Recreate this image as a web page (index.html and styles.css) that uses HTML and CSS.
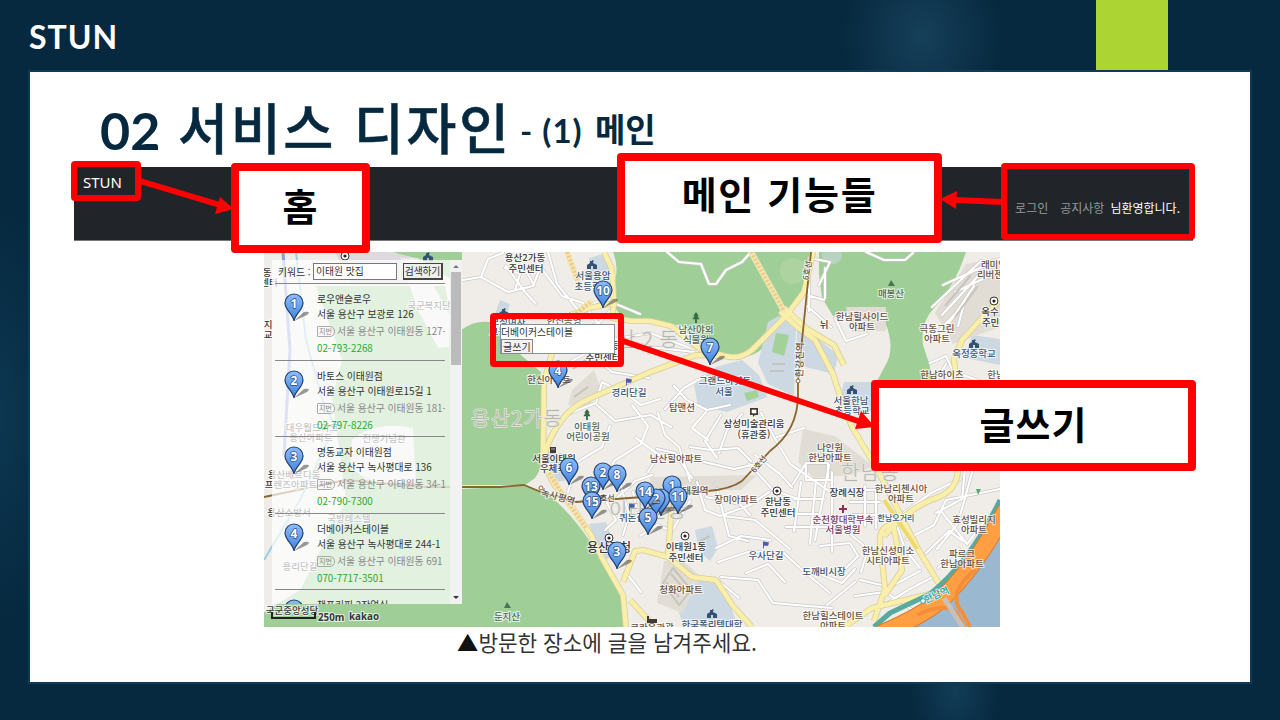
FILE: index.html
```html
<!DOCTYPE html>
<html lang="ko">
<head>
<meta charset="utf-8">
<title>STUN - 서비스 디자인</title>
<link rel="stylesheet" href="styles.css">
</head>
<body>
<div class="slide">
  <header class="slide-header"><span class="brand">STUN</span><div class="accent"></div></header>
  <main class="panel">
    <h1 class="title"><span class="num">02</span><span class="main-title">서비스 디자인</span><span class="sub num-sub">- (1)</span><span class="sub">메인</span></h1>
    <nav class="navbar"><span class="nav-brand">STUN</span><div class="nav-links"><span>로그인</span><span>공지사항</span><b>님환영합니다.</b></div></nav>
    <section class="map">
      <svg class="map-art" width="736" height="375" viewBox="264 252 736 375">
        <defs>
          <linearGradient id="pg" x1="0" y1="0" x2="0" y2="1"><stop offset="0" stop-color="#8cbcfb"/><stop offset="1" stop-color="#3f83dc"/></linearGradient>
          <symbol id="pin" viewBox="-12 -12 36 34" overflow="visible"><path d="M0 17L10 8Q18 7 13 11Z" fill="#333" opacity=".5"/><path d="M0 17C-1 10-9 6-9-1A9 9 0 0 1 9-1C9 6 1 10 0 17Z" fill="url(#pg)" stroke="#233f6c" stroke-width="1.2"/></symbol>
          <symbol id="school" viewBox="0 0 10 9"><path d="M0 9V5L3 3V1H5V0L7 1L6 2V3L10 5V9H6V6H4V9Z" fill="#345176"/></symbol>
          <symbol id="office" viewBox="-5 -5 10 10"><circle r="4" fill="#fff" stroke="#333"/><circle r="1.6" fill="#222"/></symbol>
          <symbol id="tree" viewBox="0 0 8 12"><path d="M4 0L7 4H5.5L8 8H5V12H3V8H0L2.5 4H1Z" fill="#356b45"/></symbol>
          <symbol id="flag" viewBox="0 0 7 8"><path d="M0 0H1V8H0ZM1 0L7 1L6 5H1Z" fill="#4b5da8"/></symbol>
        </defs>
        <rect x="264" y="252" width="736" height="375" fill="#f0ede8"/>
        <!-- parks -->
        <g fill="#9fcf97">
          <path d="M613 252Q621 271 611 290Q612 312 628 320H650L682 326L704 352L725 356Q750 361 763 348L790 316L806 290L813 252Z"/>
          <path d="M819 252H966Q956 284 935 307Q920 322 923 345L929 363L934 385H875L885 366Q896 349 885 322Q878 309 857 308L833 316L822 298L819 274Z"/>
          <path d="M461 372V330Q474 320 490 322L522 356L541 372L543 440Q545 466 535 478L524 486L461 489V627H624L622 595Q608 572 591 543Q572 514 548 494L526 485H461V627H264V612L300 590L346 500L332 398L342 360L316 286H445Z"/>
          <path d="M392 252H462V286L420 260Z"/>
        </g>
        <path d="M264 252H340L316 286L342 360L332 398L346 500L300 590L264 612Z" fill="#efede9"/>
        <path d="M335 252H389L425 260L432 285H352Z" fill="#ded9dc"/>
        <path d="M400 258H418L450 315L449 347L438 348L418 310ZM352 440Q375 420 413 428L416 483L377 486L350 468Z" fill="#edeaea"/>
        <!-- city lots -->
        <g fill="#ccd8e2">
          <path d="M589 258L607 253L612 284L591 281ZM768 322L782 314L796 328L794 396L768 384L758 363ZM694 385L716 367L742 360L759 375L767 397L727 412L698 406ZM797 322L838 355L834 374L797 365ZM844 382H875V408L861 417L838 407ZM589 524L606 522L616 551L604 562ZM695 530L712 526L718 548L710 561L699 551ZM689 574L713 579L728 598L738 627H684L678 610Z"/>
          <path d="M548 452L567 454L565 481L550 482ZM500 300L510 304L505 321L494 317ZM972 335L1000 339V365L965 358Z"/>
        </g>
        <g fill="#e1ddd5"><path d="M846 307H886V331L852 332ZM803 429L835 436L873 466L852 475L814 478L798 462ZM664 561L683 561L701 577L682 613L657 603ZM650 477L757 475L741 490H650ZM966 264L1000 257V327L953 344L935 313ZM572 390L594 370L601 389L588 407L568 405Z"/></g>
        <path d="M1000 500V627H907Q950 606 972 570Z" fill="#9ab8cf"/>
        <g fill="#a2d298"><path d="M776 333L789 335L784 356L772 352ZM744 393L757 390L759 397L747 401Z"/></g>
        <ellipse cx="832" cy="256" rx="10" ry="8" fill="#b9d3c3"/><circle cx="793" cy="271" r="13" fill="#add3a0"/>
        <!-- minor streets -->
        <g fill="none" stroke-linejoin="round" stroke-linecap="round">
          <g id="streets" stroke="#c9c8c8" stroke-width="3.4">
            <path id="st" d="M463 280L481 277L488 259L503 253M481 277L508 292L533 286L543 261M506 266L525 292L536 304M515 290L520 274L505 268M518 257L534 285M536 261L562 296L583 303L599 325M548 252L557 284L578 310L597 302M593 325L616 339L650 333L690 348M620 340L650 347L694 352M598 324L616 304L640 314M552 372L588 352L612 372L649 378M568 414L596 403L602 382L629 396L641 405L660 399M597 405L615 421L651 415L671 427M610 426L602 447L577 462L568 492M632 405L648 426L641 444L614 461L609 478M658 413L665 435L679 447L690 481M665 409L684 388L705 376M674 386L687 400L707 410L730 405M706 412L692 428L708 440M721 415L705 441L717 458M742 414L727 430L719 453M690 447L711 450L738 448L751 461M704 462L734 469L761 463M657 449L675 453L692 478M636 438L659 455L648 472M761 413L776 440L790 464L829 491M777 437L804 428M793 484L806 463H828V478M806 463V480H830M816 480L810 544M801 482L794 531M829 465L815 540M795 499H824M793 514H820M786 527H833M749 464L773 490L798 499M755 455L780 474L792 487M697 482L705 510L720 516L750 505L769 492M706 497L740 504L750 515M717 489L729 536L748 541M724 516L755 520L790 549M716 548L741 536L770 540M718 562L748 552L784 553L801 569L830 593M721 577L758 580L773 603L832 608M746 573L768 564L785 582M715 578L739 598M640 536L657 525L672 531L690 501M607 503L616 520L605 530M620 482L629 515L623 535M633 492L637 510M627 574L641 592M617 498L635 481L652 475M809 258V311M825 268V298M809 258L830 262L819 285M807 295L824 300M807 306L831 327M667 252L679 262L701 264L709 284L716 284L726 270L742 262L751 252M866 252L884 260L905 260L913 253M835 318L846 341L867 334M932 307L981 261M942 315L979 275M947 326L974 286M933 337L960 309M958 326L965 300M930 363L946 356L953 371L982 382M937 380L946 364M985 323L1000 318M943 285L1000 259M955 292L1000 271M851 490H884M850 502H880M852 515H875M865 486V526M876 489V528M832 472V552M820 546L850 543L858 556L839 575M822 575L842 583L855 569M850 534L868 549L861 572M901 515L931 493L960 479M907 539L934 525L946 500L1000 489M936 513L962 499L965 469M973 469L958 523L937 549M941 511L967 544L984 522M896 523L905 549L920 568M926 553L949 531L963 541M938 568L959 549M860 580L890 587L920 571M855 596L885 592L911 609M827 605L855 582M883 606L908 590L931 578"/>
          </g>
          <use href="#st" stroke="#fff" stroke-width="2.2"/>
        </g>
        <!-- arterial roads -->
        <g fill="none" stroke-linejoin="round">
          <g stroke="#d7ce9b" stroke-width="6.2"><path id="roads" d="M604 252L612 269L614 303L589 308L571 315L553 349L544 382L543 463L554 484L574 510L591 535L602 558L623 595L626 627M614 303L612 318L632 321H650L671 326L700 349L725 356Q740 360 752 350L786 316L804 292L813 252M543 459Q556 412 591 398L648 373L696 355L725 356M623 582L635 551L643 550L668 557L692 577L716 580L733 606L752 627M668 556L672 501M630 600L655 627M780 311L797 327L815 340L833 374L842 402L852 427L876 467L918 549L944 592M784 308L807 329L834 345L844 365M844 627L872 608L938 592L1000 535M884 536Q910 506 939 497Q958 489 958 468M894 524Q876 526 881 550L885 589L874 621M893 524L902 570L885 595M1000 300L983 317L962 340L954 359L957 387"/></g>
          <use href="#roads" stroke="#faefaa" stroke-width="4.6"/>
          <path d="M751 252L784 311M549 473L561 492L586 528M573 316L592 301M567 252L580 287" stroke="#f6e5b4" stroke-width="6"/>
          <path d="M751 252L784 311M549 473L561 492L586 528M573 316L592 301M567 252L580 287" stroke="#e9cd84" stroke-width="4" stroke-dasharray="2 2"/>
          <path d="M884 500L917 549" stroke="#eed969" stroke-width="4"/>
          <path d="M264 497L346 480L424 487H500L524 485L541 492L576 502L656 496L708 491Q731 489 742 481L770 451Q798 430 798 395V380L811 252" stroke="#8a652f" stroke-width="1.8"/>
          <path d="M283 252L290 350L284 455" stroke="#8d9bd9" stroke-width="3"/><path d="M296 252L306 340L324 405L335 425L300 500L264 560" stroke="#9ecce0" stroke-width="2"/>
          <path d="M874 627L890 613L930 594Q970 562 1000 500" stroke="#58aa9f" stroke-width="5"/>
          <path d="M880 634Q925 615 944 597Q978 563 1006 510" stroke="#dc762b" stroke-width="18"/><path d="M880 634Q925 615 944 597Q978 563 1006 510" stroke="#ff9e42" stroke-width="16"/>
          <path d="M917 615Q947 601 957 614L967 632M975 570Q946 594 962 612L970 627" stroke="#f48e3a" stroke-width="4"/>
          <path d="M944 598L967 634" stroke="#c8c0bb" stroke-width="5"/>
          <path d="M663 583L673 568L691 590L679 605ZM671 574L684 589M666 582L679 597M698 542L710 536M573 369L588 358M574 397L588 387M772 364H785M770 371H784M971 275L945 306M978 286L955 317" stroke="#c8c4bd" stroke-width="2"/>
        </g>
        <g class="district"><text x="471" y="426" textLength="91">용산2가동</text><text x="592" y="347" textLength="86">용산2동</text><text x="609" y="518" textLength="77">이태원동</text><text x="841" y="480" textLength="58">한남동</text></g>
        <g class="label">
          <text x="525" y="261">용산2가동</text><text x="526" y="272">주민센터</text><text class="blue" x="593" y="279">서울용암</text><text class="blue" x="592" y="290">초등학교</text><text class="green" x="696" y="333">남산야외</text><text class="green" x="696" y="343">식물원</text><text class="green" x="891" y="297">매봉산</text>
          <text class="brown" x="862" y="320">한남힐사이드</text><text class="brown" x="862" y="330">아파트</text><text class="brown" x="937" y="332">극동그린</text><text class="brown" x="937" y="342">아파트</text><text class="brown" x="942" y="378">한남하이츠</text><text class="brown" x="996" y="378">한남</text><text class="brown" x="994" y="268">래미안</text><text class="brown" x="990" y="278">리버젠</text><text x="990" y="315">옥수</text><text x="995" y="326">주민센</text><text class="blue" x="974" y="357">옥정중학교</text><text x="824" y="328">뉘</text>
          <text class="brown" x="549" y="383">한신아파트</text><text class="blue" x="629" y="396">경리단길</text><text class="green" x="587" y="430">이태원</text><text class="green" x="588" y="440">어린이공원</text><text class="brown" x="682" y="411">탑맨션</text><text class="blue" x="725" y="384">그랜드하얏트</text><text class="blue" x="724" y="395">서울</text><text x="754" y="427">삼성미술관리움</text><text x="754" y="438">(휴관중)</text><text class="brown" x="676" y="462">남산힐아파트</text><text class="brown" x="736" y="503">장미아파트</text><text x="778" y="505">한남동</text><text x="778" y="516">주민센터</text><text class="brown" x="830" y="451">나인원</text><text class="brown" x="830" y="461">한남아파트</text><text class="blue" x="851" y="404">서울한남</text><text class="blue" x="852" y="414">초등학교</text>
          <text class="brown" x="564" y="324">한신공영</text><text class="blue" x="508" y="325">보성여자</text><text class="blue" x="507" y="335">고등학교</text><text x="603" y="349">용산2동</text><text x="603" y="361">주민센터</text>
          <text x="554" y="462">서울이태원</text><text x="553" y="472">우체국</text><text class="blue" x="632" y="521">퀴논길</text><text x="609" y="552" font-size="12">용산구청</text><text x="686" y="550">이태원1동</text><text x="686" y="561">주민센터</text><text class="blue" x="766" y="559">우사단길</text><text class="brown" x="681" y="593">청화아파트</text><text class="blue" x="824" y="575">도깨비시장</text><text x="847" y="496">장례식장</text><text class="hospital" x="843" y="523">순천향대학부속</text><text class="hospital" x="843" y="533">서울병원</text><text class="brown" x="901" y="492">한남리첸시아</text><text class="brown" x="901" y="502">아파트</text><text class="blue" x="896" y="521" font-size="8">한남오거리</text><text class="brown" x="974" y="523">효성빌리지</text><text class="brown" x="974" y="533">아파트</text><text class="brown" x="888" y="554">한남신성미소</text><text class="brown" x="888" y="564">시티아파트</text><text class="brown" x="962" y="557">파르크</text><text class="brown" x="962" y="567">한남아파트</text><text class="brown" x="833" y="619">한남힐스테이트</text><text class="brown" x="833" y="629">아파트</text><text class="blue" x="712" y="628">한국폴리텍대학</text><text class="brown" x="652" y="631">크라운관광</text><text class="green" x="507" y="620">둔지산</text>
          <text class="brown" transform="translate(557 500) rotate(16)">녹사평역</text><text class="brown" x="605" y="501" font-size="8">6호선</text><text class="brown" x="691" y="494" font-size="9">이태원역</text><text class="brown" transform="translate(761 466) rotate(-50)" font-size="8">6호선</text><text class="brown" transform="translate(803 360) rotate(-88)">한강진역</text><text class="brown" transform="translate(810 271) rotate(-80)" font-size="8">6호선</text><text class="river" transform="translate(938 598) rotate(-25)">한남역</text>
        </g>
        <g class="label under-list"><text x="267" y="276">동</text><text x="269" y="286">센터</text><text x="268" y="328">지</text><text x="268" y="338">교</text><text x="429" y="309">국군복지단</text><text x="312" y="431">대우월드마크</text><text x="311" y="441">용산아파트</text><text x="384" y="442">전쟁기념관</text><text x="294" y="478">용산베르디움</text><text x="291" y="488">프렌즈아파트</text><text x="289" y="516">용산소방서</text><text x="349" y="522">국방레스텔</text><text x="300" y="570">용리단길</text></g>
        <g><use href="#school" x="587" y="260" width="10" height="9"/><use href="#school" x="499" y="308" width="10" height="9"/><use href="#school" x="969" y="339" width="10" height="9"/><use href="#school" x="847" y="385" width="10" height="9"/><use href="#school" x="423" y="252" width="10" height="9"/><use href="#school" x="707" y="609" width="10" height="9"/><use href="#tree" x="692" y="312" width="8" height="11"/><use href="#tree" x="583" y="409" width="8" height="11"/><use href="#flag" x="626" y="378" width="6" height="8"/><use href="#flag" x="629" y="503" width="6" height="8"/><use href="#flag" x="763" y="541" width="6" height="8"/><use href="#office" x="989" y="296" width="10" height="10"/><use href="#office" x="772" y="486" width="10" height="10"/><use href="#office" x="680" y="531" width="10" height="10"/><use href="#office" x="604" y="533" width="10" height="10"/><use href="#office" x="340" y="251" width="10" height="10"/><path d="M888 286L891 280L895 286ZM504 608L507 602L511 608Z" fill="#447654"/><path d="M750 408H758V415H755L753 417V415H750ZM550 447H556V453H550ZM647 616V623H657V619H649V616Z" fill="#413a35"/><path d="M752 410H756V413H752ZM551 449H555" fill="#fff" stroke="#fff" stroke-width=".6"/><path d="M843 505V513M839 509H847" stroke="#902e56" stroke-width="2"/><circle cx="541" cy="488" r="2" fill="#fff" stroke="#8a652f"/><circle cx="798" cy="381" r="2" fill="#fff" stroke="#8a652f"/><circle cx="923" cy="601" r="2.3" fill="#fff" stroke="#20aebd"/><path d="M976 489H981L978 495Z" fill="#5da571"/></g>
        <g class="pin-number">
          <g transform="translate(603 291)"><use href="#pin" x="-12" y="-12" width="36" height="34"/><text y="4">10</text></g>
          <g transform="translate(558 371)"><use href="#pin" x="-12" y="-12" width="36" height="34"/><text y="4">4</text></g>
          <g transform="translate(710 348)"><use href="#pin" x="-12" y="-12" width="36" height="34"/><text y="4">7</text></g>
          <g transform="translate(569 468)"><use href="#pin" x="-12" y="-12" width="36" height="34"/><text y="4">6</text></g>
          <g transform="translate(603 473)"><use href="#pin" x="-12" y="-12" width="36" height="34"/><text y="4">2</text></g>
          <g transform="translate(617 475)"><use href="#pin" x="-12" y="-12" width="36" height="34"/><text y="4">8</text></g>
          <g transform="translate(591 487)"><use href="#pin" x="-12" y="-12" width="36" height="34"/><text y="4">13</text></g>
          <g transform="translate(592 502)"><use href="#pin" x="-12" y="-12" width="36" height="34"/><text y="4">15</text></g>
          <g transform="translate(672 486)"><use href="#pin" x="-12" y="-12" width="36" height="34"/><text y="4">1</text></g>
          <g transform="translate(661 499)"><use href="#pin" x="-12" y="-12" width="36" height="34"/></g>
          <g transform="translate(656 499)"><use href="#pin" x="-12" y="-12" width="36" height="34"/><text y="4">2</text></g>
          <g transform="translate(645 492)"><use href="#pin" x="-12" y="-12" width="36" height="34"/><text y="4">14</text></g>
          <g transform="translate(678 497)"><use href="#pin" x="-12" y="-12" width="36" height="34"/><text y="4">11</text></g>
          <g transform="translate(648 518)"><use href="#pin" x="-12" y="-12" width="36" height="34"/><text y="4">5</text></g>
          <g transform="translate(617 552)"><use href="#pin" x="-12" y="-12" width="36" height="34"/><text y="4">3</text></g>
        </g>
        <g class="label"><text x="292" y="614">국군중앙성당</text><path d="M272 612V618H315V612" fill="none" stroke="#222" stroke-width="2"/><text class="scale" x="318" y="621">250m</text><text class="kakao" x="349" y="620">kakao</text></g>
      </svg>
      <aside class="search-list">
        <div class="search-content">
          <div class="search-row"><label>키워드 :</label><span class="keyword">이태원 맛집</span><span class="search-button">검색하기</span></div>
          <div class="place"><svg viewBox="-12 -12 36 34"><use href="#pin" x="-12" y="-12" width="36" height="34"/><text y="4">1</text></svg><div><p>로우앤슬로우</p><p>서울 용산구 보광로 126</p><p class="lot"><i>지번</i>서울 용산구 이태원동 127-</p><p class="tel">02-793-2268</p></div></div>
          <div class="place"><svg viewBox="-12 -12 36 34"><use href="#pin" x="-12" y="-12" width="36" height="34"/><text y="4">2</text></svg><div><p>바토스 이태원점</p><p>서울 용산구 이태원로15길 1</p><p class="lot"><i>지번</i>서울 용산구 이태원동 181-</p><p class="tel">02-797-8226</p></div></div>
          <div class="place"><svg viewBox="-12 -12 36 34"><use href="#pin" x="-12" y="-12" width="36" height="34"/><text y="4">3</text></svg><div><p>명동교자 이태원점</p><p>서울 용산구 녹사평대로 136</p><p class="lot"><i>지번</i>서울 용산구 이태원동 34-1</p><p class="tel">02-790-7300</p></div></div>
          <div class="place"><svg viewBox="-12 -12 36 34"><use href="#pin" x="-12" y="-12" width="36" height="34"/><text y="4">4</text></svg><div><p>더베이커스테이블</p><p>서울 용산구 녹사평대로 244-1</p><p class="lot"><i>지번</i>서울 용산구 이태원동 691</p><p class="tel">070-7717-3501</p></div></div>
          <div class="place"><svg viewBox="-12 -12 36 34"><use href="#pin" x="-12" y="-12" width="36" height="34"/></svg><div><p>챔프커피 2작업실</p></div></div>
        </div>
        <div class="scroll"><span class="up"></span><span class="thumb"></span><span class="down"></span></div>
      </aside>
      <div class="popup"><span>더베이커스테이블</span><span class="write">글쓰기</span></div>
    </section>
    <p class="caption">▲방문한 장소에 글을 남겨주세요.</p>
  </main>
  <div class="note home-source"></div><div class="note home">홈</div><div class="note features">메인 기능들</div><div class="note nav-source"></div><div class="note popup-source"></div><div class="note writing">글쓰기</div>
  <svg class="arrows" width="1280" height="720"><g fill="none" stroke="#f00" stroke-width="6"><path d="M140 181L220 205M1003 202L955 200M623 341L861 422"/></g><path d="M234 209L215 214L220 197ZM940 199L957 191L956 209ZM875 427L855 429L861 411Z" fill="#f00"/></svg>
</div>
</body>
</html>
```
FILE: styles.css
```css
* { box-sizing: border-box; }
body { margin: 0; font-family: "Noto Sans CJK KR", sans-serif; }
p { margin: 0; }
.slide { position: relative; width: 1280px; height: 720px; overflow: hidden; display: flex; flex-direction: column; background: radial-gradient(ellipse 80px 95px at 922px 36px, #164059, transparent), radial-gradient(ellipse 45px 60px at 955px 692px, #123d57, transparent), radial-gradient(ellipse 60px 210px at 0 415px, #0c3751, transparent), #06293f; }
.slide-header { height: 70px; flex: none; display: flex; justify-content: space-between; padding: 0 112px 0 29px; }
.brand { color: #fff; font: bold 32px/74px Lato, sans-serif; letter-spacing: 1px; }
.accent { width: 72px; background: #acd433; }
.panel { width: 1224px; height: 614px; flex: none; margin-left: 28px; border: 2px solid #0d3b58; background: #fff; padding: 18px 0 0 44px; display: flex; flex-direction: column; }
.title { color: #06293f; margin: 0 0 6px 26px; height: 71px; display: flex; align-items: flex-start; line-height: 71px; white-space: nowrap; font-weight: 700; }
.num { width: 78px; font-size: 52px; line-height: 80px; font-family: Lato, sans-serif; font-weight: 700; }
.main-title { width: 342px; font-size: 54.5px; letter-spacing: 2.5px; font-weight: 500; -webkit-text-stroke: .5px #06293f; }
.sub { font-size: 33px; line-height: 76px; }
.num-sub { width: 75px; font: 700 33px/80px Lato, sans-serif; letter-spacing: 1px; }
.navbar { height: 74px; width: 1119px; flex: none; display: flex; justify-content: space-between; background: #212429; color: #fff; border-bottom: 1px solid #777; }
.nav-brand { padding: 5px 0 0 9px; font: 15px/20px "Noto Sans", sans-serif; }
.nav-links { display: flex; gap: 12px; padding: 29px 13px 0 0; font-size: 12px; line-height: 23px; color: #96989b; }
.nav-links b { margin-left: -6px; color: #fff; font-weight: 400; }
.map { position: relative; flex: none; width: 736px; height: 375px; margin: 11px 0 0 190px; overflow: hidden; }
.map-art { display: block; }
.caption { width: 736px; margin-left: 165px; text-align: center; font-size: 21.3px; line-height: 30px; color: #333; }
.caption::first-letter { color: #111; }
.label text { font-size: 9.5px; font-weight: 500; fill: #373737; text-anchor: middle; paint-order: stroke; stroke: #ffffffb5; stroke-width: 2px; }
.label [font-size="12"] { font-size: 12px; }
.label [font-size="8"] { font-size: 8px; }
.label .blue { fill: #3c5678; }
.label .brown { fill: #665348; }
.label .green { fill: #526858; }
.label .hospital { fill: #7e3b63; }
.label .river { fill: #12aabe; }
.district text { font-size: 20px; font-weight: 300; fill: #b4b5ae; stroke: #e7e6e0; stroke-width: 1.5px; paint-order: stroke; }
.pin-number text, .place text { fill: #fff; stroke: #2d5188; stroke-width: 1.4px; paint-order: stroke; text-anchor: middle; font: bold 12px "Noto Sans", sans-serif; }
.label .scale, .label .kakao { text-anchor: start; font: bold 9.8px "Noto Sans", sans-serif; }
.search-list { position: absolute; left: 8px; top: 8px; width: 190px; height: 344px; overflow: hidden; display: flex; background: #ffffffb3; font-size: 9.8px; color: #333; }
.search-content { width: 178px; padding: 0 5px 0 3px; overflow: hidden; }
.search-row { height: 24px; display: flex; align-items: center; border-bottom: 1px solid #888; white-space: nowrap; padding-left: 3px; }
.search-row label { width: 35px; }
.keyword { height: 17px; width: 84px; border: 1px solid #777; background: #fff; line-height: 15px; padding-left: 2px; }
.search-button { margin-left: 6px; width: 40px; height: 17px; border: 1px solid #444; border-width: 1px 2px 2px 1px; background: #eee; line-height: 14px; text-align: center; letter-spacing: -.2px; }
.place { height: 76.5px; border-bottom: 1px solid #888; display: flex; padding-top: 8px; white-space: nowrap; }
.place > svg { width: 36px; height: 34px; margin: 0 -1px 0 7px; overflow: visible; }
.place > div { width: 129px; overflow: hidden; }
.place p { line-height: 15px; height: 15px; }
.place .lot { color: #888; height: 18px; line-height: 18px; }
.lot i { font-style: normal; font-size: 7px; line-height: 9px; display: inline-block; border: 1px solid #aaa; border-radius: 1px 5px 5px 1px; padding: 0 2px 0 1px; margin-right: 2px; vertical-align: 1px; }
.place .tel { color: #2da92d; line-height: 17px; }
.scroll { width: 12px; background: #f2f2f2; display: flex; flex-direction: column; align-items: center; }
.up, .down { border: 3px solid transparent; height: 6px; }
.up { border-bottom-color: #777; margin-top: 2px; border-top: 0; }
.down { border-top-color: #333; border-bottom: 0; margin: auto 0 2px; }
.thumb { width: 10px; height: 93px; margin-top: 4px; background: #bbb; }
.popup { position: absolute; left: 236px; top: 72px; width: 115px; height: 30px; border: 1px solid #8392a5; background: #fff; color: #333; display: flex; flex-direction: column; align-items: flex-start; font-size: 9.8px; line-height: 14px; }
.write { border: 1px solid #888; background: #f2f2f2; font-size: 10px; line-height: 13px; padding: 0 1px; }
.note { position: absolute; border: 8px solid #f00; border-radius: 4px; display: flex; justify-content: center; align-items: center; background: #fff; color: #000; font-size: 38px; font-weight: 600; letter-spacing: 1px; white-space: nowrap; }
.home-source { left: 71px; top: 161px; width: 70px; height: 40px; border-width: 6px; background: transparent; }
.home { left: 231px; top: 163px; width: 139px; height: 90px; padding-bottom: 8px; }
.features { left: 617px; top: 153px; width: 325px; height: 90px; padding-bottom: 11px; letter-spacing: 1.7px; }
.nav-source { left: 1001px; top: 163px; width: 194px; height: 77px; border-width: 6px; background: transparent; }
.popup-source { left: 490px; top: 313px; width: 134px; height: 54px; border-width: 6px; background: transparent; }
.writing { left: 871px; top: 380px; width: 325px; height: 91px; padding-bottom: 6px; }
.arrows { position: absolute; left: 0; top: 0; pointer-events: none; }
```
